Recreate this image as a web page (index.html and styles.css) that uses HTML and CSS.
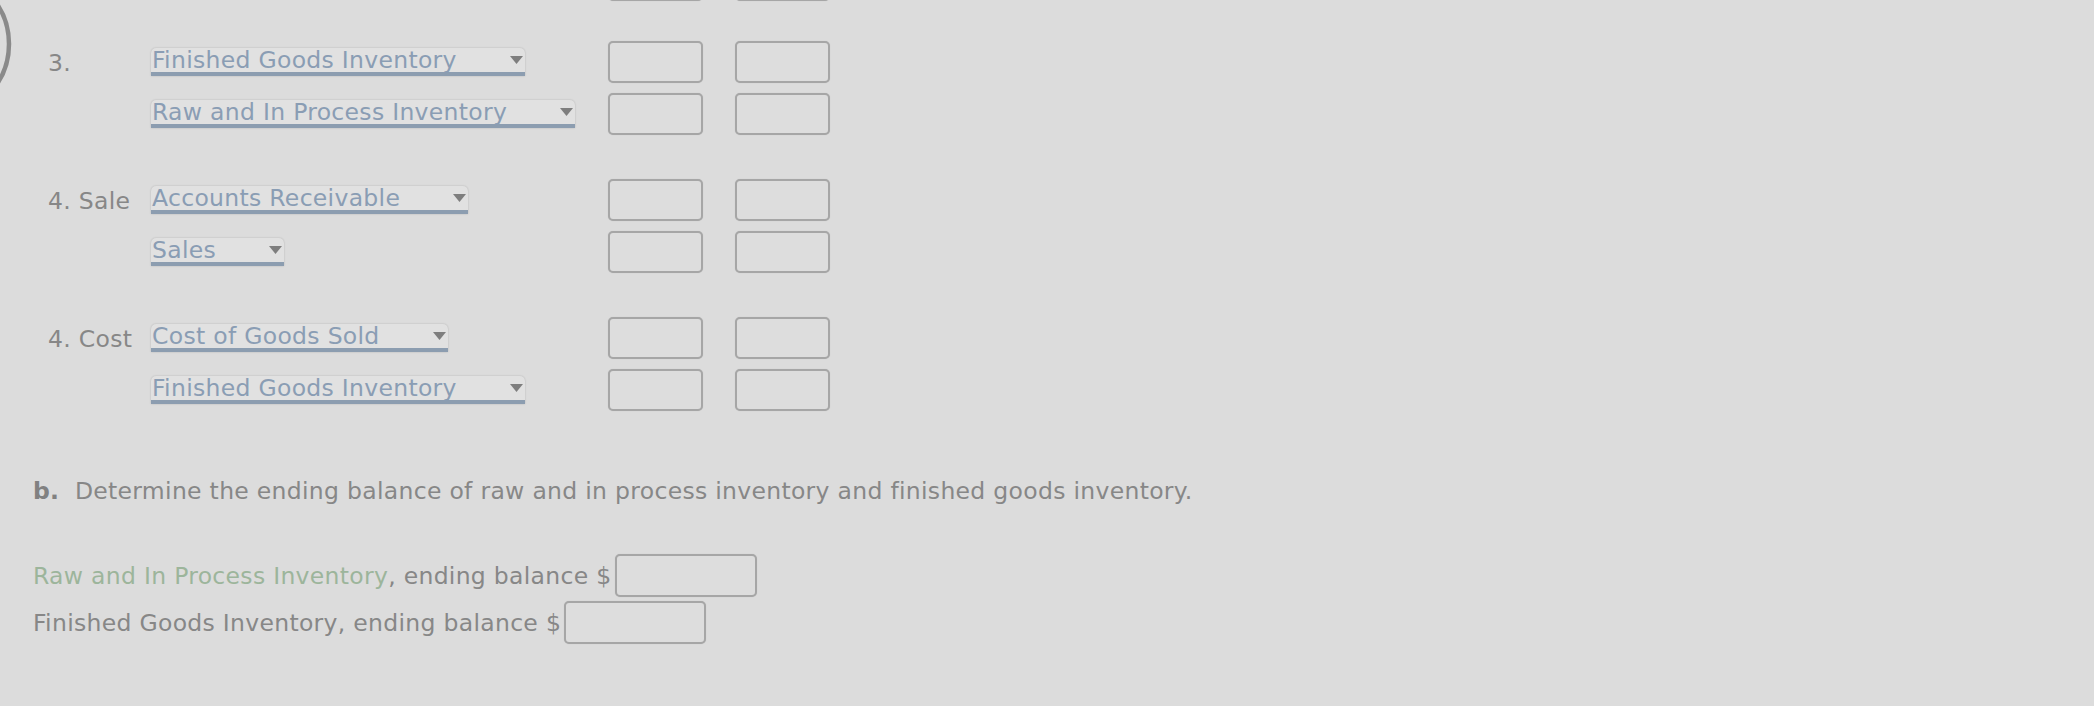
FILE: index.html
```html
<!DOCTYPE html>
<html>
<head>
<meta charset="utf-8">
<link rel="stylesheet" href="styles.css">
</head>
<body>
<svg class="ring" width="20" height="100" viewBox="0 0 20 100"><circle cx="-63" cy="44" r="72" fill="none" stroke="#8a8a8a" stroke-width="4.5"/></svg>
<div class="page">
  <div class="entries">
    <div class="row partial">
      <span class="label"></span><span class="sel-cell"></span>
      <span class="box"></span><span class="box"></span>
    </div>
    <div class="group">
      <div class="row">
        <span class="label">3.</span>
        <span class="sel-cell"><span class="sel"><span class="sel-text">Finished Goods Inventory</span><svg class="arrow" width="13" height="8" viewBox="0 0 13 8"><polygon points="0,0 13,0 6.5,8" fill="#7e7e7e"/></svg></span></span>
        <span class="box"></span><span class="box"></span>
      </div>
      <div class="row">
        <span class="label"></span>
        <span class="sel-cell"><span class="sel"><span class="sel-text">Raw and In Process Inventory</span><svg class="arrow" width="13" height="8" viewBox="0 0 13 8"><polygon points="0,0 13,0 6.5,8" fill="#7e7e7e"/></svg></span></span>
        <span class="box"></span><span class="box"></span>
      </div>
    </div>
    <div class="group">
      <div class="row">
        <span class="label">4. Sale</span>
        <span class="sel-cell"><span class="sel"><span class="sel-text">Accounts Receivable</span><svg class="arrow" width="13" height="8" viewBox="0 0 13 8"><polygon points="0,0 13,0 6.5,8" fill="#7e7e7e"/></svg></span></span>
        <span class="box"></span><span class="box"></span>
      </div>
      <div class="row">
        <span class="label"></span>
        <span class="sel-cell"><span class="sel"><span class="sel-text">Sales</span><svg class="arrow" width="13" height="8" viewBox="0 0 13 8"><polygon points="0,0 13,0 6.5,8" fill="#7e7e7e"/></svg></span></span>
        <span class="box"></span><span class="box"></span>
      </div>
    </div>
    <div class="group">
      <div class="row">
        <span class="label">4. Cost</span>
        <span class="sel-cell"><span class="sel"><span class="sel-text">Cost of Goods Sold</span><svg class="arrow" width="13" height="8" viewBox="0 0 13 8"><polygon points="0,0 13,0 6.5,8" fill="#7e7e7e"/></svg></span></span>
        <span class="box"></span><span class="box"></span>
      </div>
      <div class="row">
        <span class="label"></span>
        <span class="sel-cell"><span class="sel"><span class="sel-text">Finished Goods Inventory</span><svg class="arrow" width="13" height="8" viewBox="0 0 13 8"><polygon points="0,0 13,0 6.5,8" fill="#7e7e7e"/></svg></span></span>
        <span class="box"></span><span class="box"></span>
      </div>
    </div>
  </div>

  <p class="question"><b>b.</b>&nbsp; Determine the ending balance of raw and in process inventory and finished goods inventory.</p>

  <div class="balances">
    <div class="bal-row"><span class="green">Raw and In Process Inventory</span>, ending balance $<span class="bal-box"></span></div>
    <div class="bal-row">Finished Goods Inventory, ending balance $<span class="bal-box"></span></div>
  </div>
</div>
</body>
</html>
```

FILE: styles.css
```css
html, body {
  margin: 0;
  padding: 0;
  background: #dcdcdc;
  overflow: hidden;
}
body {
  font-family: "DejaVu Sans", Verdana, sans-serif;
  font-size: 23.5px;
  letter-spacing: 0.3px;
  color: #878787;
  position: relative;
  height: 706px;
}
.ring {
  position: absolute;
  left: 0;
  top: 0;
}
.page {
  padding-left: 33px;
}
.entries {
  display: flex;
  flex-direction: column;
  gap: 44px;
  margin-top: -41px;
  padding-left: 15px;
}
.row.partial {
  margin-bottom: -4px;
}
.group {
  display: flex;
  flex-direction: column;
  gap: 10px;
}
.row {
  display: grid;
  grid-template-columns: 103px 457px 95px 95px;
  align-items: center;
  height: 42px;
}
.row .box + .box {
  margin-left: 32px;
}
.label {
  line-height: 24px;
  padding-top: 2px;
  white-space: nowrap;
}
.sel-cell {
  display: flex;
  align-items: center;
}
.sel {
  display: inline-flex;
  align-items: center;
  height: 24px;
  line-height: 24px;
  background: #e1e1e1;
  border-bottom: 4px solid #8c9db0;
  border-radius: 5px 5px 0 0;
  box-shadow: 0 0 2px rgba(0,0,0,0.2);
  padding: 0 2px 0 1px;
  color: #8a9db4;
  white-space: nowrap;
}
.arrow {
  margin-left: 53px;
  display: block;
}
.box {
  display: block;
  width: 95px;
  height: 42px;
  box-sizing: border-box;
  border: 2px solid #a6a6a6;
  border-radius: 5px;
  background: #dddddd;
  box-shadow: 0 0 1px rgba(0,0,0,0.15);
}
.question {
  margin: 65px 0 0 0;
  line-height: 30px;
}
.question b {
  color: #818181;
}
.balances {
  margin-top: 48px;
  display: flex;
  flex-direction: column;
  gap: 4px;
}
.bal-row {
  display: flex;
  align-items: center;
  height: 43px;
  white-space: pre;
}
.green {
  color: #9cb59b;
}
.bal-box {
  display: block;
  width: 142px;
  height: 43px;
  margin-left: 3px;
  box-sizing: border-box;
  border: 2px solid #a6a6a6;
  border-radius: 5px;
  background: #dddddd;
  box-shadow: 0 0 1px rgba(0,0,0,0.15);
}
```
